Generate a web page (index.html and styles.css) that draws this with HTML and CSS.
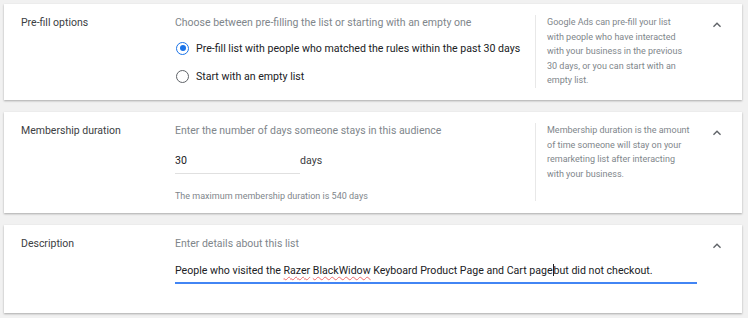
FILE: index.html
```html
<!DOCTYPE html>
<html lang="en">
<head>
  <meta charset="UTF-8" />
  <meta name="viewport" content="width=device-width, initial-scale=1.0"/>
  <title>Audience settings</title>
  <link rel="stylesheet" href="styles.css">
</head>
<body>
  <div class="panel prefill">
    <div class="panel-label">Pre-fill options</div>
    <div class="panel-body">
      <div class="hint">Choose between pre-filling the list or starting with an empty one</div>
      <label class="radio checked"><span class="dot"></span>Pre-fill list with people who matched the rules within the past 30 days</label>
      <label class="radio"><span class="dot"></span>Start with an empty list</label>
    </div>
    <div class="panel-help">Google Ads can pre-fill your list<br>with people who have interacted<br>with your business in the previous<br>30 days, or you can start with an<br>empty list.</div>
    <div class="panel-toggle">
      <svg viewBox="0 0 24 24" width="16" height="16"><path d="M12 8l-6 6 1.41 1.41L12 10.83l4.59 4.58L18 14z"/></svg>
    </div>
  </div>

  <div class="panel duration">
    <div class="panel-label">Membership duration</div>
    <div class="panel-body">
      <div class="hint">Enter the number of days someone stays in this audience</div>
      <div class="days-row">
        <div class="field short">30</div>
        <span class="unit">days</span>
      </div>
      <div class="note">The maximum membership duration is 540 days</div>
    </div>
    <div class="panel-help">Membership duration is the amount<br>of time someone will stay on your<br>remarketing list after interacting<br>with your business.</div>
    <div class="panel-toggle">
      <svg viewBox="0 0 24 24" width="16" height="16"><path d="M12 8l-6 6 1.41 1.41L12 10.83l4.59 4.58L18 14z"/></svg>
    </div>
  </div>

  <div class="panel description">
    <div class="panel-label">Description</div>
    <div class="panel-body wide">
      <div class="hint">Enter details about this list</div>
      <div class="field long">People who visited the <span class="typo">Razer</span> <span class="typo">BlackWidow</span> Keyboard Product Page and Cart page<span class="caret"></span>but did not checkout.</div>
    </div>
    <div class="panel-toggle">
      <svg viewBox="0 0 24 24" width="16" height="16"><path d="M12 8l-6 6 1.41 1.41L12 10.83l4.59 4.58L18 14z"/></svg>
    </div>
  </div>
</body>
</html>
```

FILE: styles.css
```css
body {
  margin: 0;
  padding: 4px 6px 0 4px;
  background: #f1f1f1;
  font-family: Roboto, "Liberation Sans", sans-serif;
  color: #3c4043;
}

.panel {
  display: grid;
  grid-template-columns: 154px 360px 170px 1fr;
  background: #fff;
  padding: 11px 0 12px 17px;
  margin-bottom: 12px;
  box-shadow: 0 1px 2px rgba(0,0,0,0.3);
}

.panel-label {
  font-size: 10.5px;
  line-height: 14px;
  padding-top: 1px;
  color: #3c4043;
}

.hint {
  font-size: 10.5px;
  line-height: 14px;
  padding-top: 1px;
  color: #80868b;
}

.radio {
  display: flex;
  align-items: center;
  font-size: 10.6px;
  color: #202124;
  margin-top: 10px;
  height: 16px;
}

.radio + .radio {
  margin-top: 12px;
}

.dot {
  width: 11px;
  height: 11px;
  border: 1.5px solid #5f6368;
  border-radius: 50%;
  margin: 0 7px 0 1px;
  position: relative;
}

.checked .dot {
  border-color: #1a73e8;
}

.checked .dot::after {
  content: "";
  position: absolute;
  left: 2.5px;
  top: 2.5px;
  width: 6px;
  height: 6px;
  border-radius: 50%;
  background: #1a73e8;
}

.panel-help {
  border-left: 1px solid #e8e8e8;
  padding-left: 11px;
  font-size: 9px;
  line-height: 14.6px;
  color: #80868b;
  white-space: nowrap;
}

.panel-toggle {
  text-align: right;
  padding-right: 17px;
  padding-top: 2px;
}

.panel-toggle svg {
  fill: #5f6368;
}

.days-row {
  display: flex;
  align-items: baseline;
  margin-top: 16px;
}

.field {
  font-size: 10.6px;
  line-height: 14px;
  color: #202124;
  padding-bottom: 5px;
  border-bottom: 1px solid #e0e0e0;
}

.field.short {
  width: 125px;
}

.unit {
  font-size: 10.6px;
  color: #3c4043;
}

.note {
  font-size: 9px;
  color: #80868b;
  margin-top: 17px;
}

.panel-body.wide {
  grid-column: span 2;
  padding-bottom: 17px;
}

.field.long {
  margin-top: 13px;
  width: 522px;
  padding-bottom: 4px;
  border-bottom: 2px solid #4285f4;
}

.typo {
  text-decoration: underline wavy #ef6c6c;
  text-decoration-thickness: 1px;
  text-underline-offset: 2px;
}

.caret {
  display: inline-block;
  width: 1px;
  height: 12px;
  background: #202124;
  vertical-align: -2px;
}
```
